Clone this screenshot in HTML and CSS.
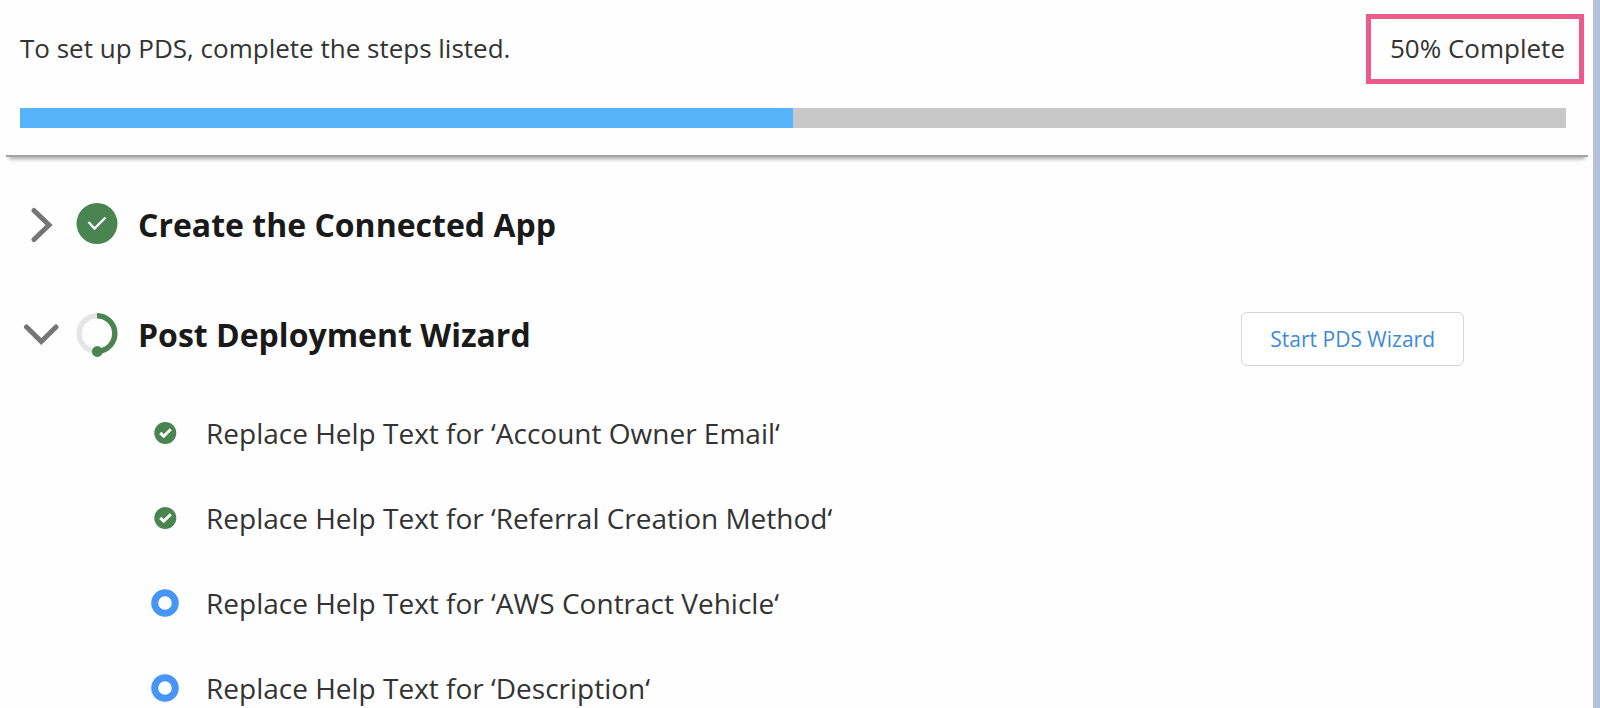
FILE: index.html
```html
<!DOCTYPE html>
<html lang="en">
<head>
<meta charset="utf-8">
<meta name="viewport" content="width=device-width, initial-scale=1">
<title>PDS Setup</title>
<link rel="stylesheet" href="styles.css">
</head>
<body>
<main class="page">
  <header class="header">
    <div class="summary">
      <label class="intro" for="setup-progress">To set up PDS, complete the steps listed.</label>
      <span class="percent">50% Complete</span>
    </div>
    <progress class="bar" id="setup-progress" value="50" max="100"></progress>
  </header>

  <section class="step">
    <button class="toggle" type="button" aria-label="Expand Create the Connected App" aria-expanded="false">
      <svg class="chevron" viewBox="0 0 36 36"><path d="M11 3.5 L26 18 L11 32.5"/></svg>
    </button>
    <svg class="status" viewBox="0 0 42 44" aria-hidden="true">
      <circle cx="21" cy="20.5" r="20.5" fill="#4a8450"/>
      <path d="M12.5 19 L18.5 25.5 L29.5 14.5" fill="none" stroke="#fff" stroke-width="2.4"/>
    </svg>
    <h2 class="title">Create the Connected App</h2>
  </section>

  <section class="step">
    <button class="toggle" type="button" aria-label="Collapse Post Deployment Wizard" aria-expanded="true">
      <svg class="chevron" viewBox="0 0 36 36"><path d="M3.5 10 L18.3 24.5 L33 10"/></svg>
    </button>
    <svg class="status" viewBox="0 0 42 44" aria-hidden="true">
      <circle cx="21" cy="20.5" r="17.8" fill="none" stroke="#e5e5e5" stroke-width="5.4"/>
      <path d="M21 2.7 A17.8 17.8 0 0 1 21 38.3" fill="none" stroke="#4a8450" stroke-width="5.4"/>
      <circle cx="21.3" cy="38.5" r="5.4" fill="#4a8450"/>
    </svg>
    <h2 class="title">Post Deployment Wizard</h2>
    <button class="start" type="button">Start PDS Wizard</button>
  </section>

  <ul class="tasks">
    <li class="task">
      <svg class="mark" viewBox="0 0 28 28" aria-hidden="true"><circle cx="14.3" cy="14" r="11" fill="#4a8450"/><path d="M9.2 13.8 L12.7 17.2 L19.8 10.2" fill="none" stroke="#fff" stroke-width="3"/></svg>
      <span>Replace Help Text for ‘Account Owner Email‘</span>
    </li>
    <li class="task">
      <svg class="mark" viewBox="0 0 28 28" aria-hidden="true"><circle cx="14.3" cy="14" r="11" fill="#4a8450"/><path d="M9.2 13.8 L12.7 17.2 L19.8 10.2" fill="none" stroke="#fff" stroke-width="3"/></svg>
      <span>Replace Help Text for ‘Referral Creation Method‘</span>
    </li>
    <li class="task">
      <svg class="mark" viewBox="0 0 28 28" aria-hidden="true"><circle cx="14" cy="14" r="10.3" fill="none" stroke="#4795f7" stroke-width="7"/></svg>
      <span>Replace Help Text for ‘AWS Contract Vehicle‘</span>
    </li>
    <li class="task">
      <svg class="mark" viewBox="0 0 28 28" aria-hidden="true"><circle cx="14" cy="14" r="10.3" fill="none" stroke="#4795f7" stroke-width="7"/></svg>
      <span>Replace Help Text for ‘Description‘</span>
    </li>
  </ul>
</main>
</body>
</html>
```
FILE: styles.css
```css
* {
  box-sizing: border-box;
}

html {
  overflow: hidden;
}

body {
  margin: 0;
  font-family: "Open Sans", "Noto Sans", sans-serif;
  color: #333;
  background: #fefefe;
}

.page {
  min-height: 100vh;
  border-right: 7px solid #b3c1df;
}

.header {
  margin: 0 5px 0 6px;
  padding: 14px 0 27px;
  border-bottom: 2px solid #a3a5a5;
  box-shadow: 0 5px 4px -3px #aaa;
  clip-path: inset(0 0 -12px 0);
}

.summary {
  display: flex;
  justify-content: space-between;
  align-items: center;
  padding: 0 4px 0 14px;
  margin-bottom: 24px;
}

.intro,
.percent {
  font-size: 26px;
  line-height: 34px;
}

.intro {
  padding-bottom: 2px;
}

.percent {
  padding: 12px 14px 14px 19px;
  border: 5px solid #ec5a8a;
}

.bar {
  display: block;
  width: calc(100% - 36px);
  height: 20px;
  margin-left: 14px;
  border: 0;
  appearance: none;
  background: #c8c8c8;
}

.bar::-webkit-progress-bar {
  background: #c8c8c8;
}

.bar::-webkit-progress-value {
  background: #57b4fb;
}

.step {
  display: flex;
  align-items: center;
  min-height: 62px;
  margin: 37px 129px 0 23px;
}

.step + .step {
  margin-top: 48px;
}

.toggle {
  padding: 0;
  border: 0;
  background: none;
}

.chevron {
  display: block;
  width: 36px;
  height: 36px;
  fill: none;
  stroke: #757575;
  stroke-width: 5;
  stroke-linecap: round;
}

.status {
  width: 42px;
  height: 44px;
  margin: 0 20px 0 17px;
}

.title {
  margin: 0;
  font-size: 32px;
  line-height: 44px;
  font-weight: 700;
  color: #1a1a1a;
}

.start {
  align-self: flex-end;
  margin-left: auto;
  padding: 8px 28px;
  font-family: inherit;
  font-size: 21px;
  line-height: 36px;
  color: #3f8ad8;
  background: #fff;
  border: 1px solid #d4d4d4;
  border-radius: 6px;
}

.tasks {
  display: grid;
  gap: 45px;
  margin: 47px 0 0;
  padding: 0 0 0 151px;
  list-style: none;
}

.task {
  display: flex;
  align-items: center;
  gap: 27px;
  font-size: 28px;
  line-height: 40px;
}

.mark {
  width: 28px;
  height: 28px;
}
```
